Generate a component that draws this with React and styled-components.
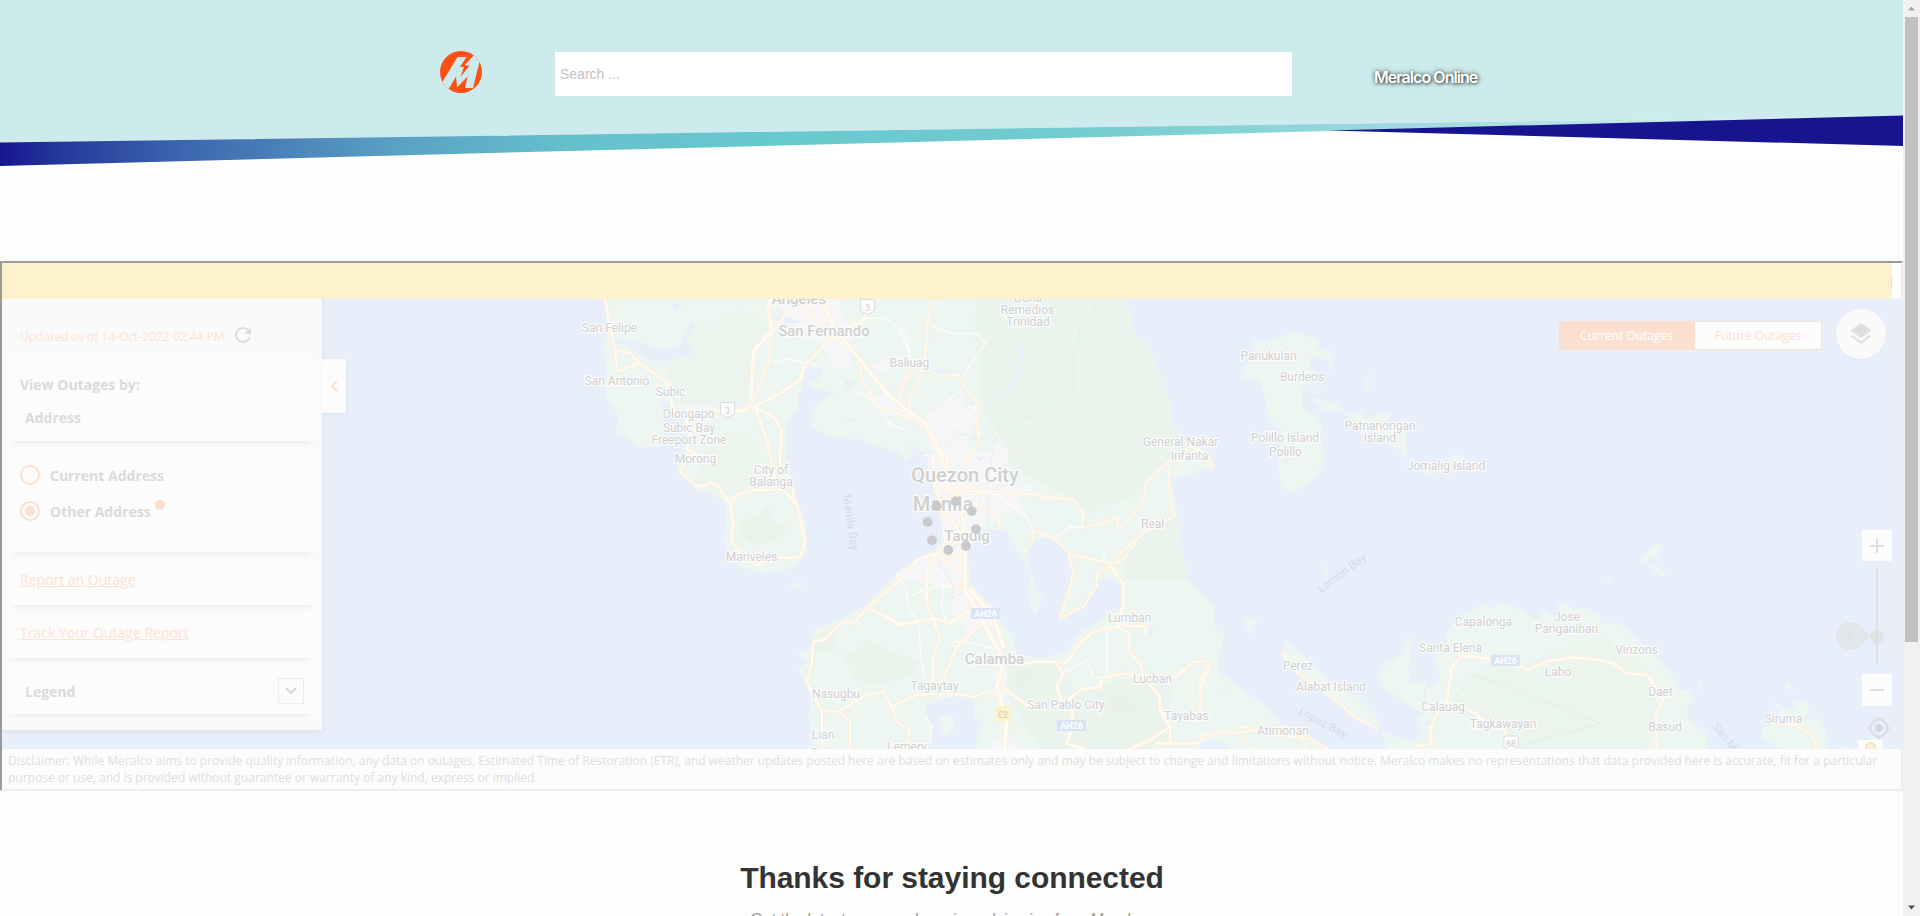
import React from "react";
import styled, { createGlobalStyle } from "styled-components";

const GlobalStyle = createGlobalStyle`
  * { box-sizing: border-box; }
  body { margin: 0; background: #fdfdfd; overflow: hidden; }
`;

const Window = styled.div`
  display: flex;
  height: 916px;
  overflow: hidden;
  font-family: "Open Sans", "Noto Sans", sans-serif;
`;

const Page = styled.div`
  width: 1903px;
  flex: none;
  background: #fdfdfd;
`;

const Header = styled.header`
  display: grid;
  height: 166px;
  background: #fff;
  > * { grid-area: 1 / 1; }
`;

const HeaderBar = styled.div`
  z-index: 1;
  display: flex;
  align-items: flex-start;
  padding: 51px 0 0 440px;
`;

const Logo = styled.svg`
  width: 42px;
  height: 42px;
  display: block;
  margin-right: 73px;
`;

const Search = styled.div`
  width: 737px;
  height: 44px;
  margin-top: 1px;
  padding: 0 5px;
  background: #fff;
  color: #c3c3c3;
  font: 14px/44px "Liberation Sans", Arial, sans-serif;
`;

const BrandLink = styled.a`
  margin: 15px 0 0 82px;
  color: #fff;
  font: 600 16px/22px Inter, sans-serif;
  letter-spacing: -0.95px;
  text-shadow: 0 0 5px rgba(0, 0, 0, 0.7), 1px 1px 3px rgba(0, 0, 0, 0.5);
`;

const Frame = styled.section`
  height: 530px;
  margin-top: 95px;
  border: 2px solid;
  border-color: #9a9a9a #ededed #ededed #9a9a9a;
`;

const Notice = styled.div`
  display: flex;
  align-items: center;
  justify-content: flex-end;
  width: 1890px;
  height: 36px;
  background: #fcf2cd;
  &::after { content: ""; width: 1px; height: 11px; background: #e5e1d2; }
`;

const MapArea = styled.div`
  display: grid;
  height: 450px;
  overflow: hidden;
  > * { grid-area: 1 / 1; }
`;

const MapSvg = styled.svg`
  display: block;
  width: 1899px;
  height: 450px;
`;

const Overlay = styled.div`
  z-index: 1;
  height: 450px;
  display: flex;
  align-items: flex-start;
`;

const Sidebar = styled.aside`
  width: 320px;
  height: 431px;
  padding: 0 8px;
  background: #fafafa;
  box-shadow: 0 1px 6px rgba(0, 0, 0, 0.07);
`;

const Updated = styled.div`
  display: flex;
  height: 60px;
  padding: 25px 0 0 10px;
  color: #fde2d4;
  font-size: 12px;
  line-height: 26px;
  svg { margin: -1px 0 0 6px; }
`;

const Card = styled.div`
  height: ${(p) => p.$h}px;
  margin-bottom: ${(p) => p.$gap || 8}px;
  padding: ${(p) => p.$pad || "0 10px"};
  background: #fcfcfc;
  box-shadow: 0 6px 5px -4px rgba(0, 0, 0, 0.06);
  color: #d9dbdb;
  font-size: 14px;
  font-weight: 700;
`;

const Line = styled.div`
  padding-left: ${(p) => p.$indent || 0}px;
  height: 33px;
  line-height: 20px;
`;

const RadioRow = styled.div`
  display: flex;
  align-items: center;
  height: 20px;
  margin-bottom: 16px;
`;

const Radio = styled.span`
  display: grid;
  place-items: center;
  width: 20px;
  height: 20px;
  margin-right: 10px;
  border: 2px solid #fddfcf;
  border-radius: 50%;
  &::after {
    content: "";
    width: 10px;
    height: 10px;
    border-radius: 50%;
    background: ${(p) => (p.$on ? "#fddfcf" : "transparent")};
  }
`;

const InfoDot = styled.svg`
  width: 10px;
  height: 10px;
  margin: -13px 0 0 4px;
`;

const SideLink = styled.a`
  color: #fde1d2;
  font-weight: 400;
  line-height: 20px;
  text-decoration: underline;
`;

const Legend = styled.div`
  display: flex;
  justify-content: space-between;
  align-items: center;
  height: 26px;
  padding-left: 5px;
`;

const DropBox = styled.span`
  display: grid;
  place-items: center;
  width: 26px;
  height: 26px;
  border: 1px solid #ececec;
`;

const Collapse = styled.div`
  display: grid;
  place-items: center;
  width: 24px;
  height: 54px;
  margin-top: 60px;
  background: #fcfcfc;
  box-shadow: 1px 2px 4px rgba(0, 0, 0, 0.04);
`;

const Tabs = styled.div`
  display: flex;
  width: 263px;
  height: 29px;
  margin: 22px 14px 0 auto;
  border: 1px solid #fadfd3;
  background: #fcfcfc;
`;

const Tab = styled.div`
  flex: 0 0 ${(p) => (p.$on ? 135 : 126)}px;
  padding-right: ${(p) => (p.$on ? 2 : 0)}px;
  background: ${(p) => (p.$on ? "#fddfcf" : "transparent")};
  color: ${(p) => (p.$on ? "#fff" : "#fddfd0")};
  font-size: 12px;
  line-height: 28px;
  text-align: center;
`;

const Controls = styled.div`
  display: flex;
  flex-direction: column;
  align-items: flex-end;
  width: 65px;
  padding: 10px 9px 0 0;
`;

const LayersButton = styled.div`
  display: grid;
  place-items: center;
  flex: none;
  width: 50px;
  height: 50px;
  margin: 0 6px 171px 0;
  border-radius: 50%;
  background: #fafafa;
  box-shadow: 0 1px 3px rgba(0, 0, 0, 0.03);
`;

const ZoomButton = styled.div`
  display: grid;
  place-items: center;
  flex: none;
  width: 30px;
  height: ${(p) => p.$h}px;
  background: #fcfcfc;
`;

const Slider = styled.svg`
  display: block;
  flex: none;
  width: 56px;
  height: 113px;
`;

const Disclaimer = styled.p`
  height: 40px;
  margin: 0;
  padding: 3px 6px;
  background: #fcfcfc;
  color: #dedede;
  font-size: 12px;
  line-height: 17px;
`;

const Closing = styled.footer`
  padding-top: 70px;
  text-align: center;
  font-family: "Liberation Sans", Arial, sans-serif;
`;

const Heading = styled.h2`
  margin: 0;
  padding-left: 1px;
  color: #333;
  font-size: 30px;
  letter-spacing: -0.05px;
  line-height: 34px;
`;

const Sub = styled.p`
  margin: 16px 0 0;
  color: #999;
  font-size: 16px;
  line-height: 18px;
  white-space: nowrap;
`;

const Scrollbar = styled.div`
  display: flex;
  flex-direction: column;
  align-items: center;
  width: 17px;
  height: 916px;
  background: #f1f1f1;
  svg { display: block; flex: none; }
`;

const Thumb = styled.div`
  width: 13px;
  height: 625px;
  margin-bottom: auto;
  background: #c1c1c1;
`;

/* Each tile is drawn in its own coordinates, three units to a pixel. */
const Tile = ({ x, y, children }) => (
  <g transform={`translate(${x} ${y}) scale(0.33333)`}>{children}</g>
);

const Road = ({ d, w = 9 }) => (
  <g fill="none" strokeLinejoin="round" strokeLinecap="round">
    <path d={d} stroke="#fdf0dc" strokeWidth={w} />
    <path d={d} stroke="#fffbf3" strokeWidth={w - 5} />
  </g>
);

const MinorRoad = ({ d }) => (
  <path d={d} fill="none" stroke="#fdfdfd" strokeWidth="4" strokeLinejoin="round" />
);

const Border = ({ d }) => (
  <path d={d} fill="none" stroke="#dfe3e1" strokeWidth="3" strokeDasharray="7 6" />
);

const LAND = "#edf6f0";
const FOREST = "#eaf4ed";
const SEA = "#e8effb";
const TOWN = "#f6f6f8";

const LABELS = [
  ["Angeles", 799, 304, 15, 500], ["San Felipe", 609.5, 332], ["San Fernando", 824, 336, 14.8, 500],
  ["Baliuag", 909.5, 367], ["San Antonio", 617, 385], ["Subic", 670.5, 396],
  ["Olongapo", 688.5, 418], ["Subic Bay", 689, 432], ["Freeport Zone", 689, 444],
  ["Morong", 695.5, 463], ["City of", 771, 474], ["Balanga", 771, 486],
  ["Mariveles", 751.5, 561], ["Doña", 1028, 302], ["Remedios", 1027.5, 314],
  ["Trinidad", 1028, 326], ["General Nakar", 1180.5, 446], ["Infanta", 1189.5, 460],
  ["Real", 1152.5, 528], ["Panukulan", 1268.5, 360], ["Burdeos", 1302, 381],
  ["Polillo Island", 1285, 442], ["Polillo", 1285.5, 456], ["Patnanongan", 1380, 430],
  ["Island", 1380, 442], ["Jomalig Island", 1446, 470], ["Lumban", 1129.5, 622],
  ["Calamba", 994.5, 664, 15, 500], ["Lucban", 1152.5, 683], ["Tagaytay", 934.5, 690],
  ["Nasugbu", 836, 698], ["San Pablo City", 1066, 709], ["Tayabas", 1186.5, 720],
  ["Lian", 823, 739], ["Lemery", 907, 751], ["Balayan", 832, 757], ["Lipa", 1005, 758],
  ["Lucena", 1174, 757], ["Perez", 1298, 670], ["Alabat Island", 1331, 691],
  ["Atimonan", 1283, 735], ["Capalonga", 1483.5, 626], ["Jose", 1567, 621],
  ["Panganiban", 1566.5, 633], ["Santa Elena", 1450.5, 652], ["Labo", 1558, 676],
  ["Calauag", 1443, 711], ["Tagkawayan", 1503, 728], ["Vinzons", 1636.5, 654],
  ["Daet", 1660.5, 696], ["Basud", 1665, 731], ["Siruma", 1783.5, 723],
  ["Quezon City", 965, 482, 20, 500], ["Manila", 943, 511, 20, 500], ["Taguig", 967, 541, 15, 500],
];

const WATER_LABELS = [
  ["Manila Bay", 847, 523, 82], ["Lamon Bay", 1344, 576, -37],
  ["Lopez Bay", 1321, 726, 28], ["San Miguel Bay", 1736, 757, 52],
];

const SPINNER = [[927.7, 522], [932, 540.3], [948.3, 550], [966, 546], [976, 529.3], [971.7, 511.3], [955.7, 501.3], [936.7, 506]];

const Ah26 = ({ x, y }) => (
  <g>
    <rect x={x} y={y} width="29" height="11" fill="#d8e3f6" />
    <text x={x + 14.5} y={y + 9} fontSize="9" fontWeight="700" fill="#fff" textAnchor="middle">AH26</text>
  </g>
);

const Shield = ({ x, y, n }) => (
  <g>
    <path d={`M${x - 7} ${y - 7}h14v11l-3 2 -4 2 -4-2 -3-2z`} fill="#fcfcfc" stroke="#d9dbdc" />
    <text x={x} y={y + 4} fontSize="9" fill="#cfcfcf" textAnchor="middle">{n}</text>
  </g>
);

const LuzonMap = () => (
  <MapSvg viewBox="2 299 1899 450" fontFamily="Roboto, sans-serif">
    <rect x="2" y="299" width="1899" height="450" fill={SEA} />
    <path fill={LAND} d="M603 299L607 323 603 350 607 373 605 397 613 405 618 417 615 433 623 435 640 448 657 447 668 438 663 433 678 427 662 422 665 413 660 403 668 400 673 408 687 410 688 450 677 463 678 473 697 487 727 503 727 523 723 537 727 553 740 567 763 573 793 568 807 553 805 523 797 497 792 480 787 460 785 450 787 423 797 410 802 390 803 373 812 368 810 387 833 393 813 407 812 427 830 437 860 440 900 453 907 462 917 447 927 460 933 487 937 503 942 520 942 540 933 553 915 562 897 573 863 607 840 620 813 630 812 647 798 653 807 663 797 670 807 683 812 693 808 717 812 737 808 749H1328L1300 733 1280 723 1267 707 1243 690 1220 673 1217 660 1225 637 1215 627 1215 607 1200 592 1188 580 1183 557 1177 537 1177 507 1170 477 1177 478 1212 468 1210 457 1190 447 1180 433 1172 423 1172 403 1163 390 1157 367 1147 343 1133 333 1128 299Z" />
    <Tile x={900} y={290}>
      <path fill={FOREST} d="M230 27L225 130 245 260 240 330 260 400 300 420 330 530 450 590 520 620 560 680 640 640 700 620 750 560 810 515 870 480 815 400 815 340 770 230 740 160 700 130 685 27Z" />
      <path fill={FOREST} d="M660 800L740 720 830 680 850 800 865 870H680Z" />
      <path fill="#ecf5eb" d="M350 330l40-14-15 30zM440 190l25-10-8 24zM570 120l10-15-6 36zM660 200l40 20-20 8zM735 290l25-20-10 30zM480 430l24-24-10 40zM650 400l10 40-20-18zM700 330l40-25-22 40zM730 500l25-20-10 38zM580 330l14 16-12 16zM590 400l14 6-3 36z" />
      <path fill={SEA} d="M365 165L380 185 360 220 362 260 325 300 308 335 320 290 345 270 355 210Z" />
      <path fill={TOWN} d="M75 385L150 320 165 340 190 300 190 345 230 350 235 390 200 460 240 490 275 480 290 455 325 480 325 510 300 540 300 600 400 580 405 610 350 620 370 655 310 670 290 700 270 690 240 715 210 790 200 870H0L80 830 130 760 125 690 105 600 80 520 60 490 100 500Z" />
      <path fill={SEA} d="M35 470L90 510 75 530 40 520ZM225 500L255 500 240 515Z" />
      <Border d="M585 30L580 70 540 110 530 170 520 190 520 310 430 372 370 385 300 405 270 440 240 450 180 430 130 480 60 490M300 410L280 470 270 540 262 600 265 700" />
      <MinorRoad d="M0 120L25 180 30 240M90 105L150 130 230 130 257 160 200 240 190 255M190 295L150 330M80 440L190 400 230 345" />
      <Road d="M115 27L85 70 80 150 70 230 30 330 30 365M90 240L120 260 170 255 200 300 240 350 230 400 240 460 205 500 190 510M-5 290L20 270 45 240" />
      <Road w={14} d="M0 355L80 415 110 480 150 560" />
      <Road w={12} d="M100 500L105 600 130 650 180 730 165 760 110 795 50 810M140 500L150 600 175 640 190 690 200 870M0 870L50 820 100 810 80 870M120 790L190 800" />
      <Road d="M105 600L190 570 205 500M110 640L190 590 240 600 390 612 440 620 520 630 550 670 545 712 610 700 650 685 655 715 680 700 735 620 735 580 800 520 822 510 870 470 900 480 935 510 935 535M805 530L812 640 825 680 790 695 720 735 650 800 640 830 560 800 510 790 460 745 400 725 400 780 355 785 300 710 295 670 240 650 170 660" />
      <Road d="M130 620L250 610M120 680L230 640M150 540L230 600 230 650M190 580L140 660M510 795L520 870M640 830L660 870M590 870L600 845 640 830" />
      <MinorRoad d="M240 605L300 615 335 650 380 680 400 725M460 745L510 710 550 712M610 810L615 780" />
      <path fill={LAND} d="M360 780L400 800 385 830 375 870Z" />
    </Tile>
    <Tile x={540} y={290}>
      <path fill={FOREST} d="M420 160L600 60 680 110 640 180 620 330 560 340 400 340 380 240ZM500 440L620 430 690 540 660 600 560 620 470 590Z" opacity=".75" />
      <path fill="#e7f1ea" d="M600 700L650 680 680 650 700 690 740 715 710 750 640 765 600 735Z" opacity=".8" />
      <path fill={TOWN} d="M700 27H890L930 120 935 150 930 230H880L850 170 800 130 740 80ZM990 220L1045 210 1050 250 1000 250Z" />
      <path fill={TOWN} d="M980 320L1040 315 1080 350 1070 380 1020 365ZM430 345L540 355 500 400 450 400Z" />
      <path fill={SEA} d="M200 145L290 155 380 180 420 160 455 95 470 105 440 150 470 220 440 200 400 210 320 212 280 180ZM385 27L430 55 405 60ZM790 240L840 235 850 250 820 280 790 270ZM700 75L740 80 800 100 720 95ZM770 310L800 300 810 320 780 340ZM910 265L940 280 920 300ZM920 385L950 385 935 395ZM1170 240L1240 240 1200 252Z" />
      <MinorRoad d="M690 205L710 220 730 205 830 225M980 85L1040 85 1095 130 1110 200M940 300L1000 330 1050 400 1095 420" />
      <Road w={11} d="M195 27L210 110 225 180 270 190 300 220 385 280 390 320 400 360 450 370 520 365 600 360 630 345M225 180L232 245 300 220" />
      <Road w={14} d="M690 27L685 60 695 120 640 185 633 340 620 360 580 365" />
      <Road w={12} d="M640 350L720 310 780 270 795 225 870 150 940 100 960 110 980 70M630 345L700 380 725 420 720 510 730 590M645 350L680 450 710 580 770 640 785 710 797 750 780 800 740 805 700 800 650 825 600 790 575 750 580 690 568 640 600 610 650 600 730 598M568 640L535 590 510 578 475 592 420 545 440 510 470 490 440 480 450 440 440 390M760 595L762 640" />
      <Road d="M760 50L735 75 690 140 690 205 660 290 635 340M960 200L965 270 1020 350 1100 380 1160 410 1205 490M1100 240L1075 350" />
      <Road w={15} d="M845 27L880 110 960 210 1050 320 1155 400 1210 500" />
      <Road w={11} d="M785 45L870 130 930 180" />
    </Tile>
    <Tile x={740} y={530}>
      <path fill={SEA} d="M725 0L795 0 845 80 868 120 860 70 885 35 915 20 955 45 990 80 1000 120 990 180 960 260 970 270 1010 240 1060 180 1072 150 1110 140 1150 175 1150 235 1090 265 1020 310 980 365 900 385 830 372 820 320 770 260 730 200 692 160 682 70Z" />
      <path fill={LAND} d="M870 120L890 180 908 205 885 255 868 230 865 180Z" />
      <path fill={TOWN} d="M470 130L530 90 600 60 670 70 680 170 760 230 780 280 760 290 720 280 690 310 650 260 630 250 640 180 560 160 540 150 480 150ZM760 430L800 410 810 480 790 500 770 480ZM750 640L830 620 840 657H760Z" />
      <path fill={FOREST} d="M220 310L280 300 290 350 250 370 220 360ZM310 380L390 330 450 370 540 390 520 440 360 470ZM800 410L960 400 1000 480 1200 440 1300 470 1280 657H900L800 500Z" />
      <path fill="#e7f1ea" d="M810 430L870 410 890 450 850 475 810 465ZM1070 490L1140 475 1200 520 1180 560 1100 560Z" opacity=".8" />
      <path fill={SEA} d="M560 525L630 500 680 495 705 520 700 560 725 580 715 620 700 657H565L580 600 560 570Z" />
      <path fill={LAND} d="M600 560L640 555 643 600 615 620 600 600Z" />
      <path fill={SEA} d="M1220 300L1240 295 1232 325ZM1385 640L1440 632V657H1385Z" />
      <Border d="M590 80L640 170 635 205 690 175" />
      <MinorRoad d="M470 130L500 180 500 220 535 280 545 400 560 470 640 500M515 195L600 165 680 175M610 170L605 230 620 290M625 335L680 335 740 350 780 360M680 330L700 290M970 430L1040 390 1060 440 1100 445 1100 300M555 560L575 590 570 640" />
      <Road w={11} d="M530 90L610 60 620 10M530 92L480 150 380 235 340 280 310 275 250 330 220 335 215 400 200 455 220 500 245 540 295 545 330 575 330 657M295 545L380 495 430 485 455 530 530 495 640 490 700 500 740 485 770 495M245 540L247 657M455 530L470 575 510 600 500 640" />
      <Road w={12} d="M590 70L560 130 560 220 600 320 580 380 580 450M380 235L440 260 480 285 580 265 630 280 690 240M720 285L650 350 610 450" />
      <Road w={16} d="M675 60L675 180 720 260 780 370 785 420 770 470 780 500 800 570 795 657M690 180L760 260 790 350" />
      <Road w={12} d="M785 470L860 525 920 540M850 402L890 395 980 398 1020 340 1060 305 1130 290 1150 220 1150 160 1110 105 1150 90M1130 290L1170 310 1165 360 1205 410 1210 440M945 398L970 430 950 470 975 540 1000 540 995 600 980 640 1030 657M970 520L1020 480 1080 470 1085 445 1150 430 1210 440 1310 440 1360 395 1410 397 1385 470 1380 540M1210 440L1260 500 1260 540 1290 590 1230 630 1170 657M1130 285L1220 290 1215 310M1290 590L1290 640 1370 640 1400 615 1440 610M1250 640H1340" />
      <Road d="M985 75L1000 130 985 190 960 265 1030 230 1070 170 1070 125 1120 110M1150 90L1190 30 1220 0M985 75L1120 100M595 80L670 120M670 170H635M600 70L670 80" />
    </Tile>
    <Tile x={1200} y={300}>
      <path fill={LAND} d="M165 118L180 120 190 130 240 110 285 95 305 105 345 110 362 135 340 160 325 205 350 215 355 240 300 265 310 290 305 310 330 345 345 340 370 380 360 410 373 450 370 490 350 530 310 560 275 578 245 560 235 520 238 470 248 400 205 350 195 290 180 245 150 235 125 243 130 210 150 170ZM330 165L380 140 398 165 402 215 380 180 350 175ZM342 295L405 305 432 338 395 330 370 338ZM350 270L368 265 360 280 345 280ZM500 225L516 218 502 245 490 245ZM498 255L508 255 505 278 492 275ZM440 340L490 338 490 355 545 340 570 345 560 370 618 400 622 470 605 470 600 450 560 430 520 380 460 370ZM670 515L745 490 750 468 770 462 800 480 770 500 680 527ZM370 790L387 805 378 830ZM1217 820L1232 850 1226 850Z" />
      <path fill={SEA} d="M245 475L270 475 265 490 250 488Z" />
    </Tile>
    <Tile x={1200} y={540}>
      <path fill={LAND} d="M560 627L545 575 640 605 665 570 650 540 668 520 620 490 570 460 545 440 520 390 540 410 548 380 590 350 610 340 615 295 637 295 630 350 625 400 635 430 675 420 680 445 715 430 720 410 705 370 710 340 750 330 735 290 770 230 800 220 850 190 870 205 890 200 900 185 930 195 970 210 1000 235 1020 240 1030 210 1060 230 1085 215 1070 190 1090 185 1120 210 1155 200 1200 225 1200 250 1265 250 1290 280 1360 340 1420 410 1435 450 1475 450 1480 485 1460 500 1465 540 1520 580 1522 627ZM260 305L290 330 345 380 400 430 470 470 530 530 543 560 525 567 460 530 370 460 310 410 270 370 245 345ZM125 240L150 228 173 240 150 285 140 260ZM1320 62L1345 30 1365 10 1388 15 1370 50 1340 65ZM1350 75L1375 80 1405 110 1370 105ZM1217 100L1232 125 1220 120ZM1490 425L1505 430 1502 455ZM1750 425L1770 430 1785 460 1760 440ZM1710 485L1745 495 1800 520 1775 490 1820 480 1795 455 1825 485 1828 525 1800 540 1855 535 1875 570 1883 600 1880 627H1740L1715 610 1685 590 1685 565 1780 535 1740 520ZM1920 615L1950 620 1960 627H1920Z" />
      <path fill={FOREST} d="M820 400L960 380 1180 290 1300 330 1350 420 1370 500 1340 627H960L910 560 800 520 770 480Z" opacity=".75" />
      <path fill={SEA} d="M0 610L40 600 80 615 90 627H0ZM670 548L690 542 685 560ZM55 465L80 460 70 468Z" />
      <Border d="M670 515L675 440M760 480L820 403 1200 550 960 617" />
      <Road w={12} d="M655 620L695 610 690 570 710 520 740 490 755 380 790 345 870 357M950 378L990 388 1040 365 1110 352 1200 360 1240 370 1280 400 1340 405 1365 440 1390 480 1370 520 1370 627M790 505L830 520 840 535 910 560 920 590" />
      <Road d="M245 338L270 375 300 405 380 460 420 490 460 530 530 565M0 590L50 575 110 580 170 570M115 580L115 560 150 565M120 590L150 627M270 590L330 595 385 627M300 595L320 627M1725 550L1780 555 1830 580 1847 605V627M0 365H33L0 415V470" />
    </Tile>
    <path fill={LAND} d="M788 585l13-3 4 3-10 3z" />
    <g fill="#cfcfcf" textAnchor="middle" stroke="#fbfcfc" strokeWidth="2.5" strokeLinejoin="round" paintOrder="stroke">
      {LABELS.map(([t, x, y, size = 12, weight = 400]) => (
        <text key={t + x + y} x={x} y={y} fontSize={size} fontWeight={weight}>{t}</text>
      ))}
    </g>
    <g fill="#cfdcf1" fontSize="11.5" textAnchor="middle">
      {WATER_LABELS.map(([t, x, y, a]) => (
        <text key={t} transform={`translate(${x} ${y}) rotate(${a})`}>{t}</text>
      ))}
    </g>
    <Ah26 x={971} y={608} />
    <Ah26 x={1057} y={720} />
    <Ah26 x={1491} y={655} />
    <Shield x={867.5} y={306.5} n="3" />
    <Shield x={727.5} y={409.5} n="3" />
    <Shield x={1511} y={743} n="68" />
    <rect x="995.5" y="706" width="15" height="15" rx="3" fill="#fcf2cc" />
    <text x="1003" y="717.5" fontSize="9" fill="#d5d0bc" textAnchor="middle">E2</text>
    {SPINNER.map(([x, y]) => (
      <circle key={x} cx={x} cy={y} r="4.9" fill="#cacaca" />
    ))}
    <circle cx="1879" cy="728" r="8.5" fill="none" stroke="#dadcdf" strokeWidth="2" />
    <circle cx="1879" cy="728" r="4" fill="#d6d8db" />
    <path d="M1879 717v3M1879 736v3M1868 728h3M1887 728h3" stroke="#dadcdf" strokeWidth="2" />
    <rect x="1858" y="740" width="25" height="14" rx="1" fill="#fcfcfc" />
    <circle cx="1870.5" cy="747.5" r="5" fill="#fdefcc" stroke="#ded9cf" />
  </MapSvg>
);

export default function App() {
  return (
    <>
      <GlobalStyle />
      <Window>
        <Page>
          <Header>
            <svg width="1903" height="166" viewBox="0 0 1903 166">
              <defs>
                <linearGradient id="stripe" gradientUnits="userSpaceOnUse" x1="0" y1="0" x2="1903" y2="0">
                  <stop offset="0" stopColor="#171490" />
                  <stop offset=".03" stopColor="#23379a" />
                  <stop offset=".1" stopColor="#3d68b0" />
                  <stop offset=".21" stopColor="#5aa2c4" />
                  <stop offset=".3" stopColor="#66c0cc" />
                  <stop offset=".43" stopColor="#68cacf" />
                  <stop offset=".56" stopColor="#72cbd0" />
                  <stop offset=".7" stopColor="#93d7da" />
                  <stop offset=".9" stopColor="#cdebec" />
                </linearGradient>
              </defs>
              <path d="M0 0H1903V116L0 142.500Z" fill="#cdebec" />
              <path d="M0 142.500L1903 116 1329 131 0 166Z" fill="url(#stripe)" />
              <path d="M1329 130.500L1903 115.500V146Z" fill="#171490" />
            </svg>
            <HeaderBar>
              <Logo viewBox="0 0 42 42">
                <defs>
                  <clipPath id="disc"><circle cx="21" cy="21" r="21" /></clipPath>
                </defs>
                <g clipPath="url(#disc)">
                  <rect width="42" height="42" fill="#ff5014" />
                  <path d="M17.500 6H26.500L20 16H24L20.500 26 29.500 14.500H24.500L34 4 42 0 39 13 33 37H25L27.500 25.500 17 36.500 16 25.500 9 37.500 0 42 3 30Z" fill="#cdebec" />
                </g>
              </Logo>
              <Search>Search ...</Search>
              <BrandLink>Meralco Online</BrandLink>
            </HeaderBar>
          </Header>
          <Frame>
            <Notice />
            <MapArea>
              <LuzonMap />
              <Overlay>
                <Sidebar>
                  <Updated>
                    Updated as of 14-Oct-2022 02:44 PM
                    <svg width="24" height="24" viewBox="0 0 24 24" fill="#dcdddd">
                      <path d="M17.650 6.350C16.200 4.900 14.210 4 12 4c-4.420 0-7.990 3.580-7.990 8s3.570 8 7.990 8c3.730 0 6.840-2.550 7.730-6h-2.080c-.820 2.330-3.040 4-5.650 4-3.310 0-6-2.690-6-6s2.690-6 6-6c1.660 0 3.140.69 4.220 1.780L13 11h7V4l-2.350 2.350z" />
                    </svg>
                  </Updated>
                  <Card $h={82} $gap={9} $pad="16px 10px">
                    <Line>View Outages by:</Line>
                    <Line $indent={5}>Address</Line>
                  </Card>
                  <Card $h={102} $pad="15px 10px">
                    <RadioRow><Radio />Current Address</RadioRow>
                    <RadioRow>
                      <Radio $on />
                      Other Address
                      <InfoDot viewBox="0 0 10 10">
                        <circle cx="5" cy="5" r="5" fill="#fddccb" />
                        <path d="M5 2.500v1M5 4.500v2" stroke="#fdeee6" strokeWidth="1" />
                      </InfoDot>
                    </RadioRow>
                  </Card>
                  <Card $h={45} $pad="10px"><SideLink>Report an Outage</SideLink></Card>
                  <Card $h={45} $pad="10px"><SideLink>Track Your Outage Report</SideLink></Card>
                  <Card $h={48} $pad="12px 10px">
                    <Legend>
                      Legend
                      <DropBox>
                        <svg width="12" height="8" viewBox="0 0 12 8" fill="none" stroke="#d2d3d3" strokeWidth="1.800"><path d="M1 1l5 5 5-5" /></svg>
                      </DropBox>
                    </Legend>
                  </Card>
                </Sidebar>
                <Collapse>
                  <svg width="8" height="12" viewBox="0 0 8 12" fill="none" stroke="#fddfcf" strokeWidth="2"><path d="M7 1L2 6l5 5" /></svg>
                </Collapse>
                <Tabs>
                  <Tab $on>Current Outages</Tab>
                  <Tab>Future Outages</Tab>
                </Tabs>
                <Controls>
                  <LayersButton>
                    <svg width="24" height="24" viewBox="0 0 24 24" fill="#dfdfdf">
                      <path d="M12 1L22.500 8.500 12 16 1.500 8.500ZM3.300 13L12 19.200 20.700 13 22.500 14.300 12 22 1.500 14.300Z" />
                    </svg>
                  </LayersButton>
                  <ZoomButton $h={31}>
                    <svg width="14" height="14" viewBox="0 0 14 14" stroke="#dedede" strokeWidth="2"><path d="M7 0v14M0 7h14" /></svg>
                  </ZoomButton>
                  <Slider viewBox="0 0 56 113">
                    <circle cx="14" cy="75" r="14" fill="#e2e5ea" />
                    <path d="M23 64L35 75 23 86Z" fill="#e2e5ea" />
                    <circle cx="41" cy="76" r="7" fill="#e0e4e6" />
                    <path d="M41 7v96" stroke="#dcdfe2" strokeWidth="2" />
                    <text x="14" y="79" fontSize="10" fill="#dadde2" textAnchor="middle">9</text>
                  </Slider>
                  <ZoomButton $h={32}>
                    <svg width="14" height="2" viewBox="0 0 14 2"><rect width="14" height="2" fill="#dedede" /></svg>
                  </ZoomButton>
                </Controls>
              </Overlay>
            </MapArea>
            <Disclaimer>
              Disclaimer: While Meralco aims to provide quality information, any data on outages, Estimated Time of
              Restoration (ETR), and weather updates posted here are based on estimates only and may be subject to
              change and limitations without notice. Meralco makes no representations that data provided here is
              accurate, fit for a particular purpose or use, and is provided without guarantee or warranty of any
              kind, express or implied.
            </Disclaimer>
          </Frame>
          <Closing>
            <Heading>Thanks for staying connected</Heading>
            <Sub>Get the latest news and service advisories from Meralco.</Sub>
          </Closing>
        </Page>
        <Scrollbar>
          <svg width="17" height="17" viewBox="0 0 17 17"><path d="M5 10.500l3.500-4 3.500 4z" fill="#a3a3a3" /></svg>
          <Thumb />
          <svg width="17" height="17" viewBox="0 0 17 17"><path d="M5 6.500l3.500 4 3.500-4z" fill="#505050" /></svg>
        </Scrollbar>
      </Window>
    </>
  );
}
